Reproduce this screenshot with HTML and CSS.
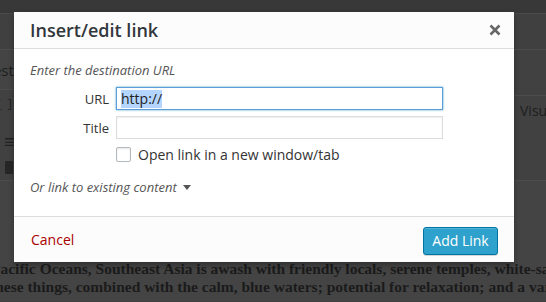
FILE: index.html
```html
<!DOCTYPE html>
<html>
<head>
<meta charset="utf-8">
<link rel="stylesheet" href="styles.css">
</head>
<body>
<div class="bg">
  <div class="bg-top"></div>
  <div class="bg-head"></div>
  <div class="bg-mid">
    <div class="bg-left">
      <div class="bg-title"><span class="bg-title-text">Desti</span></div>
      <div class="bg-tools">
        <span class="bg-tool">[ ]</span>
        <span class="bg-tool bg-tool-list">&#8801;</span>
        <span class="bg-clip"></span>
      </div>
    </div>
    <div class="bg-right">
      <div class="bg-tabs-gap"></div>
      <div class="bg-tab">Visual</div>
    </div>
  </div>
  <div class="bg-editor">
    <div class="ed-line ed-line1">Pacific Oceans, Southeast Asia is awash with friendly locals, serene temples, white-sand beaches</div>
    <div class="ed-line ed-line2">these things, combined with the calm, blue waters; potential for relaxation; and a variety</div>
  </div>
</div>

<div class="modal">
  <div class="modal-head">
    <h1 class="modal-title">Insert/edit link</h1>
    <button class="modal-close" aria-label="Close">
      <svg width="12" height="12" viewBox="0 0 12 12"><path d="M1.5 1.5 L10.5 10.5 M10.5 1.5 L1.5 10.5" stroke="#666" stroke-width="2.6" stroke-linecap="butt"/></svg>
    </button>
  </div>
  <div class="modal-body">
    <p class="hint">Enter the destination URL</p>
    <div class="field">
      <label class="field-label">URL</label>
      <div class="field-input focused"><span class="sel">http://</span></div>
    </div>
    <div class="field">
      <label class="field-label">Title</label>
      <div class="field-input"></div>
    </div>
    <div class="field check-row">
      <span class="field-label"></span>
      <span class="checkbox"></span>
      <span class="check-text">Open link in a new window/tab</span>
    </div>
    <p class="existing">Or link to existing content <span class="caret"></span></p>
  </div>
  <div class="modal-foot">
    <a class="cancel">Cancel</a>
    <button class="btn-primary">Add Link</button>
  </div>
</div>
</body>
</html>
```

FILE: styles.css
```css
* { box-sizing: border-box; }
html, body { margin: 0; padding: 0; }
body {
  width: 546px;
  height: 302px;
  overflow: hidden;
  background: #414141;
  font-family: "Open Sans", "Noto Sans", sans-serif;
  position: relative;
}

/* background (dimmed editor) */
.bg-top { height: 14px; background: #383838; border-bottom: 1px solid #4a4a4a; }
.bg-head { height: 36px; background: #404040; border-bottom: 1px solid #4c4c4c; }
.bg-mid { display: flex; justify-content: space-between; height: 131px; border-bottom: 1px solid #4c4c4c; }
.bg-left { width: 40px; display: flex; flex-direction: column; }
.bg-title { height: 40px; border-bottom: 1px solid #4c4c4c; display: flex; align-items: center; overflow: hidden; background: #444; }
.bg-title-text { margin-left: -18px; font-size: 15px; color: #1e1e1e; white-space: nowrap; }
.bg-tools { display: flex; flex-direction: column; align-items: flex-start; padding-top: 6px; }
.bg-tool { font-size: 12px; color: #222; margin-left: -3px; line-height: 16px; letter-spacing: 2px; }
.bg-tool-list { font-size: 18px; margin-left: 4px; line-height: 18px; margin-top: 20px; }
.bg-clip { width: 8px; height: 13px; background: #262626; margin-left: 5px; margin-top: 11px; border-radius: 1px; }
.bg-right { width: 32px; display: flex; flex-direction: column; overflow: hidden; }
.bg-tabs-gap { height: 46px; border-bottom: 1px solid #4c4c4c; }
.bg-tab { padding: 5px 0 0 6px; font-size: 14px; color: #1e1e1e; white-space: nowrap; }
.bg-editor { padding-top: 79px; background: #444; height: 120px; overflow: hidden; }
.ed-line {
  font-family: "Liberation Serif", "Times New Roman", serif;
  font-weight: bold;
  font-size: 15.5px;
  line-height: 18px;
  color: #1b1b1b;
  white-space: nowrap;
}
.ed-line1 { margin-left: -9px; }
.ed-line2 { margin-left: -10px; }

/* modal */
.modal {
  position: absolute;
  left: 14px;
  top: 12px;
  width: 500px;
  height: 250px;
  background: #fff;
  display: flex;
  flex-direction: column;
  box-shadow: 0 3px 6px rgba(0,0,0,0.3);
}
.modal-head {
  height: 37px;
  background: #fcfcfc;
  border-bottom: 1px solid #dddddd;
  display: flex;
  align-items: center;
  justify-content: space-between;
  padding: 0 13px 0 16px;
}
.modal-title {
  margin: 0;
  font-size: 18px;
  font-weight: 600;
  color: #32373c;
  line-height: 36px;
}
.modal-close {
  border: 0;
  background: none;
  padding: 0;
  width: 12px;
  height: 12px;
  display: flex;
  margin-top: -1px;
}
.modal-body { flex: 1; padding: 11px 16px 0 16px; }
.hint {
  margin: 0 0 7px 0;
  font-style: italic;
  font-size: 13px;
  line-height: 20px;
  color: #555;
}
.field { display: flex; align-items: center; margin-bottom: 6px; }
.field-label {
  width: 86px;
  flex: none;
  text-align: right;
  padding-right: 7px;
  font-size: 13px;
  color: #333;
}
.field-input {
  width: 327px;
  height: 23px;
  border: 1px solid #dddddd;
  box-shadow: inset 0 1px 2px rgba(0,0,0,0.07);
  display: flex;
  align-items: center;
  padding-left: 4px;
  font-size: 14px;
  color: #333;
}
.field-input.focused { border-color: #5b9dd9; box-shadow: 0 0 2px rgba(30,140,190,0.8); }
.sel { background: #b4d5fe; color: #222; line-height: 18px; }
.check-row { margin-top: 2px; }
.checkbox {
  width: 15px;
  height: 15px;
  border: 1px solid #b4b9be;
  border-radius: 2px;
  background: #fff;
  box-shadow: inset 0 1px 2px rgba(0,0,0,0.1);
  margin-right: 7px;
}
.check-text { font-size: 14px; color: #333; }
.existing {
  margin: 14px 0 0 0;
  font-style: italic;
  font-size: 13px;
  color: #555;
  display: flex;
  align-items: center;
  gap: 6px;
}
.caret {
  width: 0; height: 0;
  border-left: 4px solid transparent;
  border-right: 4px solid transparent;
  border-top: 5px solid #555;
}
.modal-foot {
  height: 46px;
  background: #fcfcfc;
  border-top: 1px solid #dddddd;
  display: flex;
  align-items: center;
  justify-content: space-between;
  padding: 0 16px 0 17px;
}
.cancel { font-size: 14px; color: #a00; }
.btn-primary {
  width: 75px;
  height: 28px;
  background: #2ea2cc;
  border: 1px solid #0074a2;
  border-radius: 3px;
  color: #fff;
  font-family: "Open Sans", "Noto Sans", sans-serif;
  font-size: 14px;
  box-shadow: inset 0 1px 0 rgba(120,200,230,0.5), 0 1px 0 rgba(0,0,0,0.15);
  padding: 0;
  margin-top: 2px;
}
```
